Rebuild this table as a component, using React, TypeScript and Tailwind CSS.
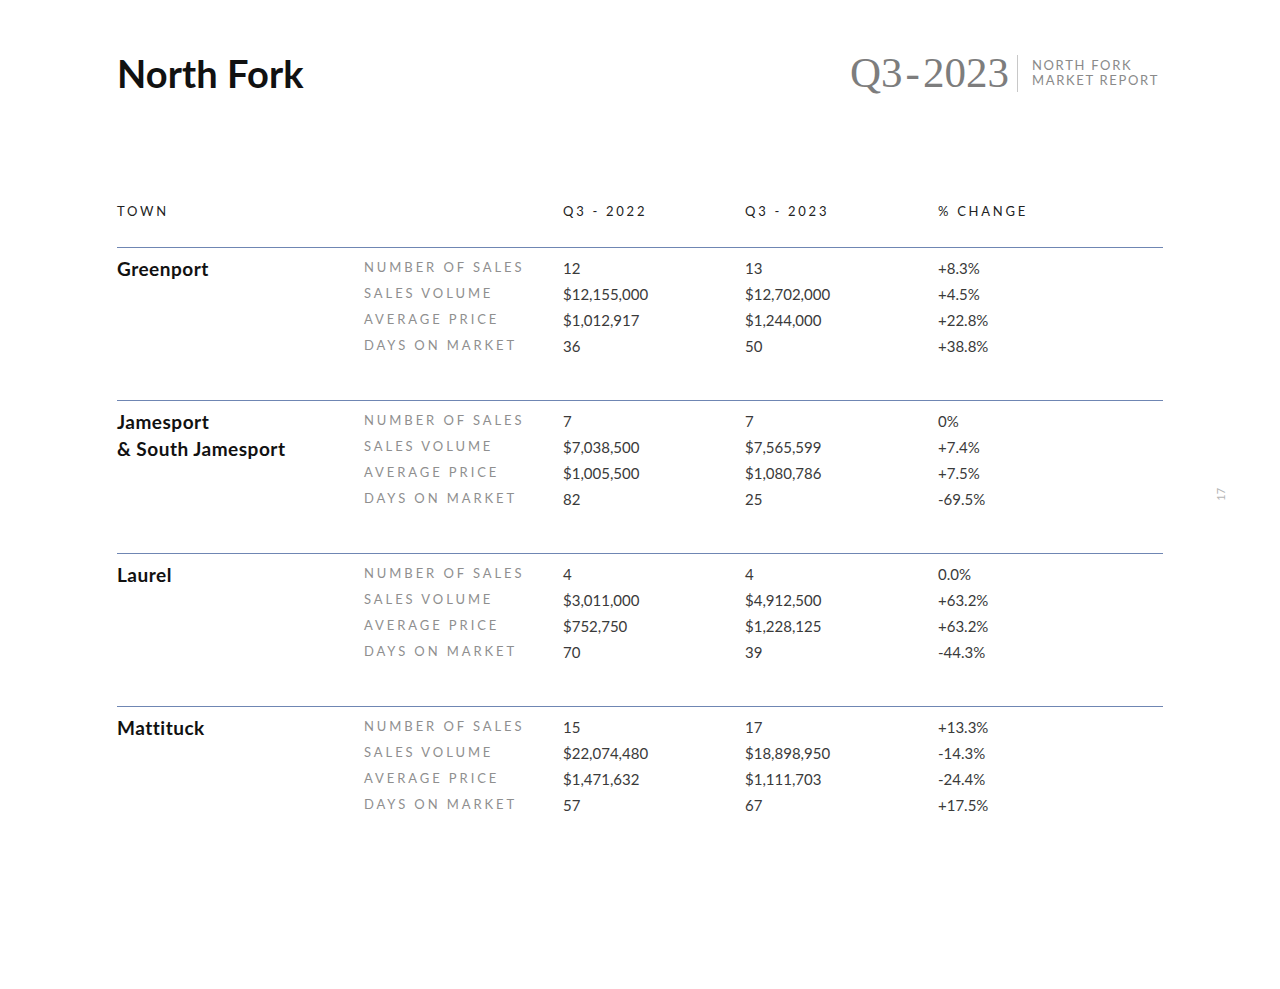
import React from "react";

type Group = { town: string[]; rows: [string, string, string, string][] };

const groups: Group[] = [
  {
    town: ["Greenport"],
    rows: [
      ["NUMBER OF SALES", "12", "13", "+8.3%"],
      ["SALES VOLUME", "$12,155,000", "$12,702,000", "+4.5%"],
      ["AVERAGE PRICE", "$1,012,917", "$1,244,000", "+22.8%"],
      ["DAYS ON MARKET", "36", "50", "+38.8%"],
    ],
  },
  {
    town: ["Jamesport", "& South Jamesport"],
    rows: [
      ["NUMBER OF SALES", "7", "7", "0%"],
      ["SALES VOLUME", "$7,038,500", "$7,565,599", "+7.4%"],
      ["AVERAGE PRICE", "$1,005,500", "$1,080,786", "+7.5%"],
      ["DAYS ON MARKET", "82", "25", "-69.5%"],
    ],
  },
  {
    town: ["Laurel"],
    rows: [
      ["NUMBER OF SALES", "4", "4", "0.0%"],
      ["SALES VOLUME", "$3,011,000", "$4,912,500", "+63.2%"],
      ["AVERAGE PRICE", "$752,750", "$1,228,125", "+63.2%"],
      ["DAYS ON MARKET", "70", "39", "-44.3%"],
    ],
  },
  {
    town: ["Mattituck"],
    rows: [
      ["NUMBER OF SALES", "15", "17", "+13.3%"],
      ["SALES VOLUME", "$22,074,480", "$18,898,950", "-14.3%"],
      ["AVERAGE PRICE", "$1,471,632", "$1,111,703", "-24.4%"],
      ["DAYS ON MARKET", "57", "67", "+17.5%"],
    ],
  },
];

const cols = "grid grid-cols-[247px_199px_182px_193px_1fr]";

export default function App() {
  return (
    <div
      className="relative w-[1280px] h-[989px] bg-white text-[#111]"
      style={{ fontFamily: "Lato, 'Noto Sans', sans-serif" }}
    >
      {/* Header */}
      <div className="flex items-center justify-between px-[117px] pt-[50px]">
        <h1 className="text-[38px] font-bold leading-[46px] tracking-[0.1px] text-[#111]">
          North Fork
        </h1>
        <div className="flex items-center mr-[4px]">
          <div
            className="text-[43px] leading-[46px] text-[#7d7d7d]"
            style={{ fontFamily: "'Liberation Serif', 'DejaVu Serif', serif" }}
          >
            Q3<span className="mx-[3px]">-</span>2023
          </div>
          <div className="ml-[8px] mr-[14px] h-[37px] w-px bg-[#c8c8c8]" />
          <div className="flex flex-col text-[13px] leading-[15px] tracking-[0.13em] text-[#8a8a8a]">
            <span>NORTH FORK</span>
            <span>MARKET REPORT</span>
          </div>
        </div>
      </div>

      {/* Table */}
      <div className="px-[117px] mt-[103px]">
        <div className={`${cols} h-[26px] items-center text-[13px] tracking-[0.21em] text-[#222] mb-[22px]`}>
          <div>TOWN</div>
          <div />
          <div>Q3 - 2022</div>
          <div>Q3 - 2023</div>
          <div>% CHANGE</div>
        </div>

        {groups.map((g, gi) => (
          <div key={gi} className="border-t border-[#6f86b3] pt-[7px] pb-[41px]">
            <div className={`${cols}`}>
              <div className="row-span-4 text-[19px] font-bold leading-[27px] tracking-[0.5px] text-[#111]">
                {g.town.map((t, i) => (
                  <div key={i}>{t}</div>
                ))}
              </div>
              {g.rows.map((r, ri) => (
                <React.Fragment key={ri}>
                  <div className="h-[26px] flex items-center text-[13px] tracking-[0.225em] text-[#8f8f8f]">
                    {r[0]}
                  </div>
                  <div className="h-[26px] flex items-center text-[15px] text-[#3a3a3a]">{r[1]}</div>
                  <div className="h-[26px] flex items-center text-[15px] text-[#3a3a3a]">{r[2]}</div>
                  <div className="h-[26px] flex items-center text-[15px] text-[#3a3a3a]">{r[3]}</div>
                </React.Fragment>
              ))}
            </div>
          </div>
        ))}
      </div>

      {/* Page number */}
      <div className="absolute left-[1215px] top-[486px] -rotate-90 text-[11px] text-[#b5b5b5]">
        17
      </div>
    </div>
  );
}
